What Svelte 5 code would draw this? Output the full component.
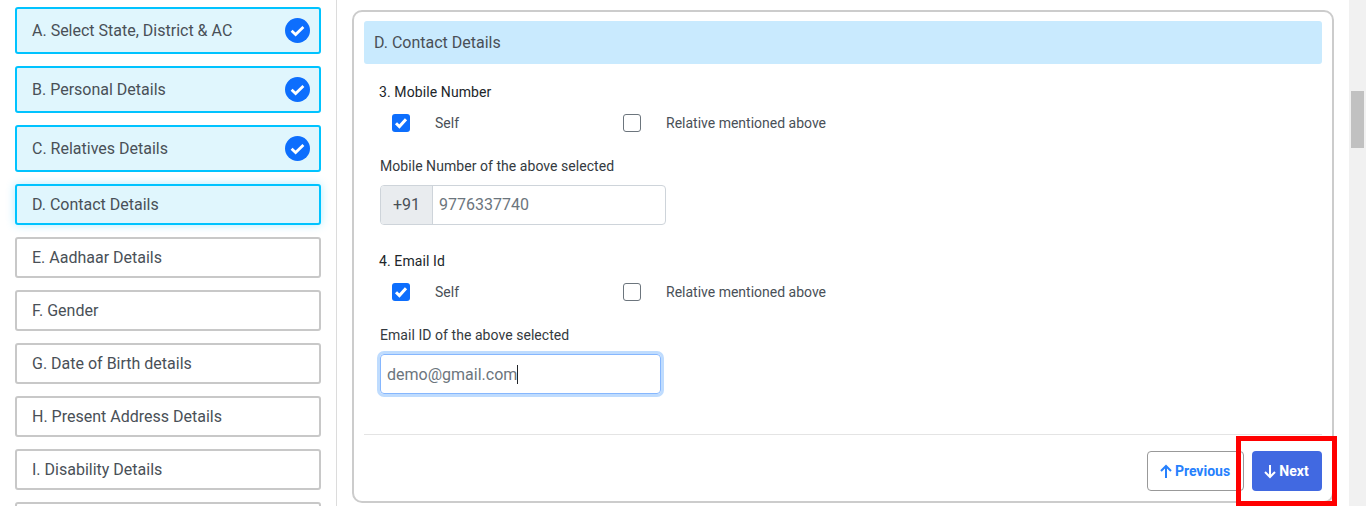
<script>
  const steps = [
    { t: 'A. Select State, District & AC', s: 'done' },
    { t: 'B. Personal Details', s: 'done' },
    { t: 'C. Relatives Details', s: 'done' },
    { t: 'D. Contact Details', s: 'active' },
    { t: 'E. Aadhaar Details', s: '' },
    { t: 'F. Gender', s: '' },
    { t: 'G. Date of Birth details', s: '' },
    { t: 'H. Present Address Details', s: '' },
    { t: 'I. Disability Details', s: '' },
    { t: '', s: '' }
  ];
</script>

<div class="page">
  <aside class="side">
    {#each steps as step}
      <div class="step {step.s}">
        <span>{step.t}</span>
        {#if step.s === 'done'}
          <svg class="tick" viewBox="0 0 25 25" width="25" height="25" aria-hidden="true">
            <circle cx="12.5" cy="12.5" r="12.5" fill="#0d6efd" />
            <path d="M6.6 12.800l4 3.700 7.800-7.500" fill="none" stroke="#fff" stroke-width="2.800" />
          </svg>
        {/if}
      </div>
    {/each}
  </aside>

  <main class="main">
    <section class="card">
      <h2 class="head">D. Contact Details</h2>

      <div class="group first">
        <div class="q">3. Mobile Number</div>
        <div class="opts">
          <span class="opt self">
            <span class="box on"><svg viewBox="0 0 18 18" width="18" height="18" aria-hidden="true"><path d="M4 9.200l3.400 3.400 6.600-7.400" fill="none" stroke="#fff" stroke-width="3" /></svg></span>
            <span class="optl">Self</span>
          </span>
          <span class="opt">
            <span class="box"></span>
            <span class="optl">Relative mentioned above</span>
          </span>
        </div>
        <div class="lab">Mobile Number of the above selected</div>
        <div class="igroup">
          <span class="pre">+91</span>
          <span class="val">9776337740</span>
        </div>
      </div>

      <div class="group second">
        <div class="q">4. Email Id</div>
        <div class="opts">
          <span class="opt self">
            <span class="box on"><svg viewBox="0 0 18 18" width="18" height="18" aria-hidden="true"><path d="M4 9.200l3.400 3.400 6.600-7.400" fill="none" stroke="#fff" stroke-width="3" /></svg></span>
            <span class="optl">Self</span>
          </span>
          <span class="opt">
            <span class="box"></span>
            <span class="optl">Relative mentioned above</span>
          </span>
        </div>
        <div class="lab">Email ID of the above selected</div>
        <div class="focus"><span>demo@gmail.com</span><i class="caret"></i></div>
      </div>

      <footer class="foot">
        <button class="btn prev">
          <svg viewBox="0 0 12 15" width="12" height="15" aria-hidden="true"><path d="M6 14V2.500M1 7l5-5 5 5" fill="none" stroke="currentColor" stroke-width="2" /></svg>
          Previous
        </button>
        <button class="btn next">
          <svg viewBox="0 0 12 15" width="12" height="15" aria-hidden="true"><path d="M6 1v11.500M1 8l5 5 5-5" fill="none" stroke="currentColor" stroke-width="2" /></svg>
          Next
        </button>
      </footer>
    </section>
  </main>

  <div class="bar"><div class="thumb"></div></div>
  <div class="mark"></div>
</div>

<style>
  :global(body) {
    margin: 0;
    overflow: hidden;
    background: #fff;
  }
  .page {
    position: relative;
    display: flex;
    width: 1366px;
    height: 506px;
    overflow: hidden;
    font-family: Roboto, "Liberation Sans", sans-serif;
    color: #212529;
  }
  .side {
    box-sizing: border-box;
    flex: 0 0 337px;
    height: 506px;
    padding: 7px 15px 0;
    border-right: 1px solid #dcdcdc;
    display: flex;
    flex-direction: column;
    gap: 12px;
  }
  .step {
    box-sizing: border-box;
    flex: 0 0 41px;
    width: 306px;
    display: flex;
    align-items: center;
    justify-content: space-between;
    padding: 0 9px 0 15px;
    border: 2px solid #c8c8c8;
    border-radius: 3px;
    font-size: 16px;
    color: #495057;
  }
  .step.done,
  .step.active {
    background: #e0f6fd;
    border-color: #00c3ff;
  }
  .step.done {
    flex-basis: 47px;
  }
  .step.active {
    box-shadow: 0 0 10px rgba(0, 195, 255, 0.3);
  }
  .tick {
    display: block;
  }
  .main {
    flex: 0 0 1012px;
    box-sizing: border-box;
    padding: 10px 15px 0;
  }
  .card {
    box-sizing: border-box;
    width: 982px;
    height: 493px;
    border: 2px solid #ccc;
    border-radius: 10px;
    padding: 9px 10px 0;
    display: flex;
    flex-direction: column;
  }
  .head {
    margin: 0;
    height: 43px;
    line-height: 43px;
    padding-left: 10px;
    background: #c9eafe;
    border-radius: 3px;
    font-size: 16px;
    font-weight: 400;
    color: #495057;
  }
  .group {
    padding-left: 15px;
  }
  .first {
    margin-top: 20px;
  }
  .second {
    margin-top: 28px;
  }
  .q {
    font-size: 14px;
    line-height: 16px;
    font-weight: 400;
    letter-spacing: 0.1px;
    color: #212529;
    height: 16px;
  }
  .opts {
    display: flex;
    margin-top: 14px;
    height: 18px;
  }
  .opt {
    display: flex;
    align-items: center;
    padding-left: 13px;
  }
  .self {
    width: 218px;
  }
  .box {
    box-sizing: border-box;
    width: 18px;
    height: 18px;
    border: 1px solid #6c757d;
    border-radius: 3px;
    background: #fff;
    display: block;
  }
  .box.on {
    background: #0d6efd;
    border: 0;
  }
  .box svg {
    display: block;
  }
  .optl {
    margin-left: 25px;
    font-size: 14px;
    color: #495057;
  }
  .lab {
    margin-top: 26px;
    margin-left: 1px;
    font-size: 14px;
    line-height: 16px;
    font-weight: 400;
    letter-spacing: 0.05px;
    color: #343a40;
  }
  .igroup {
    box-sizing: border-box;
    display: flex;
    width: 286px;
    height: 40px;
    margin: 11px 0 0 1px;
    border: 1px solid #ced4da;
    border-radius: 4px;
    overflow: hidden;
    font-size: 16px;
    line-height: 38px;
  }
  .pre {
    width: 52px;
    box-sizing: border-box;
    padding-left: 12px;
    background: #e9ecef;
    border-right: 1px solid #ced4da;
    color: #495057;
  }
  .val {
    padding-left: 6px;
    color: #6c757d;
  }
  .focus {
    box-sizing: border-box;
    display: flex;
    align-items: center;
    width: 281px;
    height: 40px;
    margin: 11px 0 0 1px;
    padding-left: 6px;
    border: 1px solid #86b7fe;
    border-radius: 4px;
    box-shadow: 0 0 0 3px #bfdcfe;
    font-size: 16px;
    color: #6c757d;
  }
  .caret {
    display: block;
    width: 1px;
    height: 19px;
    background: #212529;
  }
  .foot {
    margin-top: 40px;
    height: 56px;
    border-top: 1px solid #e4e4e4;
    display: flex;
    justify-content: flex-end;
    align-items: flex-start;
    gap: 8px;
    padding-top: 16px;
  }
  .btn {
    box-sizing: border-box;
    height: 40px;
    display: flex;
    align-items: center;
    justify-content: center;
    gap: 3px;
    border-radius: 4px;
    font-family: inherit;
    font-size: 14px;
    font-weight: 700;
    padding: 0 1px 0 0;
  }
  .prev {
    width: 97px;
    background: #fff;
    border: 1px solid #999;
    color: #2680fd;
  }
  .next {
    width: 70px;
    background: #4169e1;
    border: 0;
    color: #fff;
  }
  .bar {
    flex: 0 0 17px;
    height: 506px;
    background: #f1f1f1;
    position: relative;
  }
  .thumb {
    position: absolute;
    left: 2px;
    top: 91px;
    width: 13px;
    height: 57px;
    background: #c1c1c1;
  }
  .mark {
    position: absolute;
    left: 1236px;
    top: 436px;
    width: 101px;
    height: 70px;
    box-sizing: border-box;
    border: 5px solid #f00;
  }
</style>
